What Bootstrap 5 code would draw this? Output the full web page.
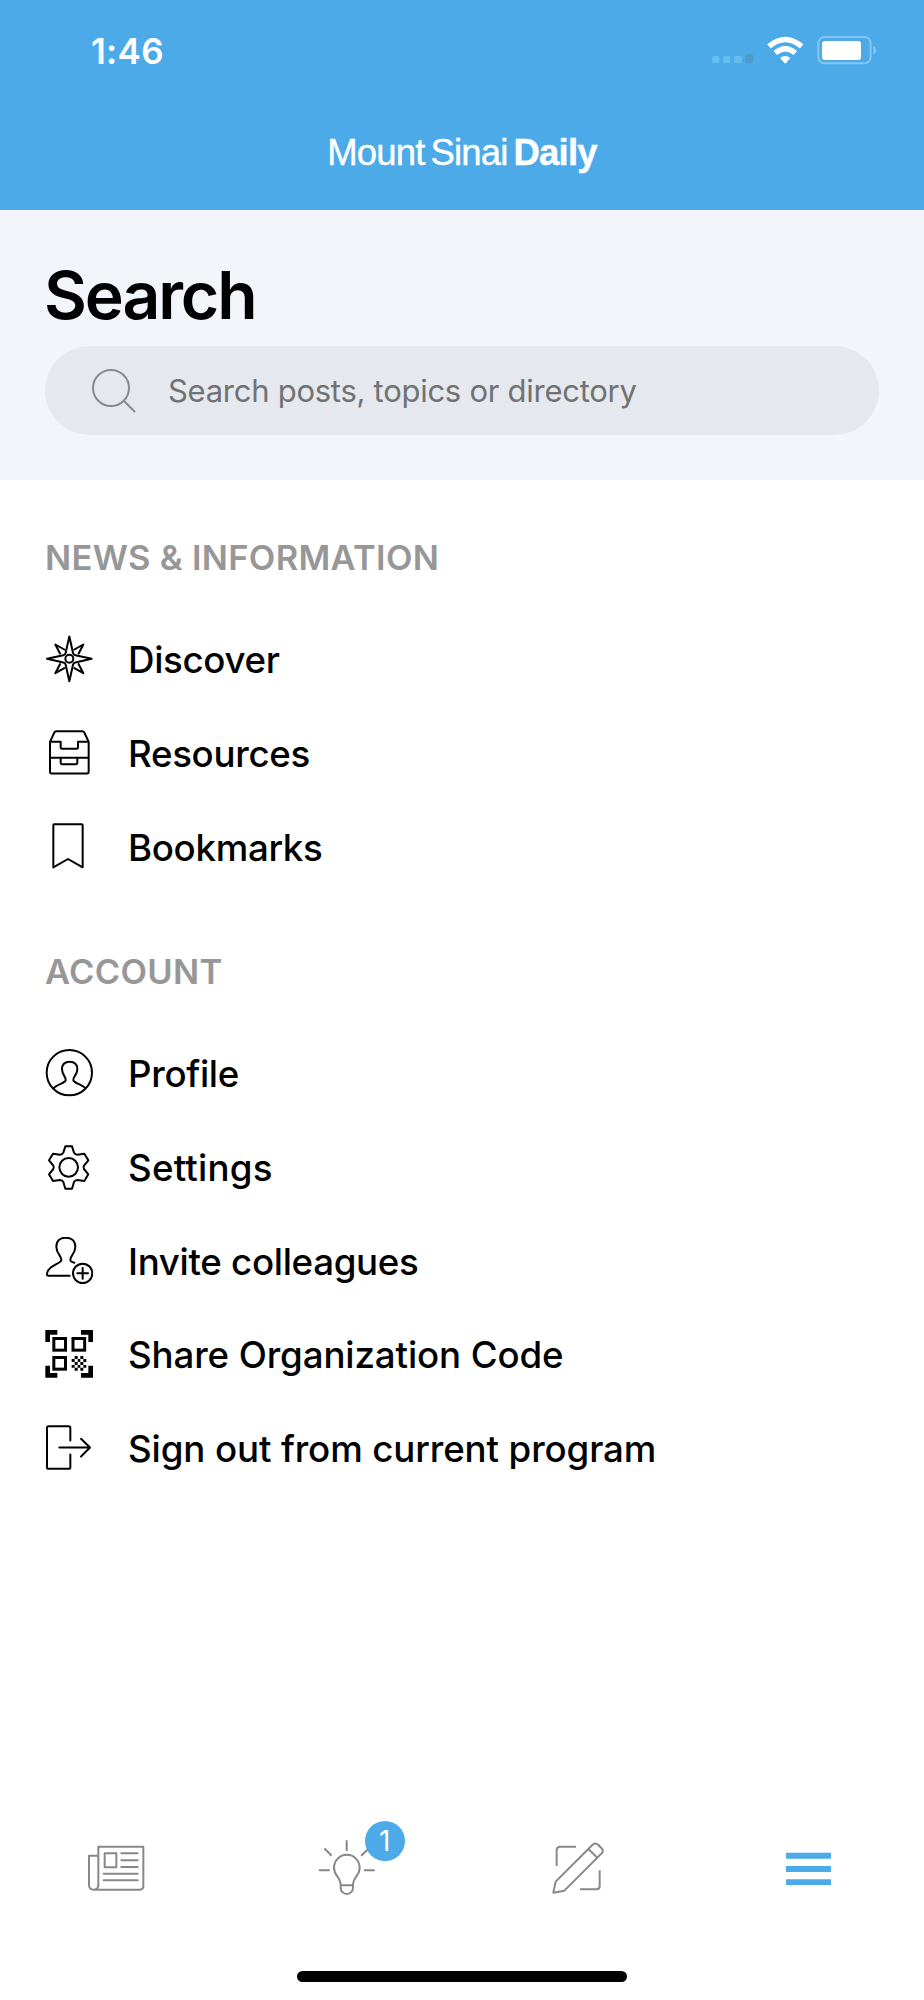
<!DOCTYPE html>
<html lang="en">
<head>
<meta charset="utf-8">
<meta name="viewport" content="width=device-width, initial-scale=1">
<title>Mount Sinai Daily</title>
<link href="https://cdn.jsdelivr.net/npm/bootstrap@5.3.0/dist/css/bootstrap.min.css" rel="stylesheet">
<style>
  :root { --brand: #4daae8; }
  body { font-family: Inter, "Liberation Sans", sans-serif; color: #000; background: #fff; }
  .screen { height: 2000px; }
  .top-bar { height: 210px; background: var(--brand); }
  .status { height: 100px; padding-left: 91px; padding-right: 24px; }
  .clock { font-size: 35px; font-weight: 600; line-height: 40px; padding-top: 2px; letter-spacing: .3px; }
  .brand-name { font-family: "Liberation Sans", Arial, sans-serif; font-size: 36.5px; line-height: 44px; padding-top: 31px; white-space: nowrap; letter-spacing: -.8px; word-spacing: -3.5px; -webkit-text-stroke: .4px #fff; }
  .finder { height: 270px; padding: 52px 45px 0; background: #f2f5fa; }
  .finder h1 { font-size: 66px; font-weight: 600; line-height: 66px; margin-bottom: 18px; margin-left: -1px; letter-spacing: -2.1px; }
  .pill { height: 89px; background: #e5e8ed; color: #707274; padding-left: 45px; font-size: 31px; letter-spacing: -.27px; }
  .pill svg { margin-right: 31px; }
  .pill span { padding-top: 1px; }
  .group { padding: 58px 45px 0; }
  .group h2 { font-size: 34.5px; font-weight: 600; line-height: 40px; color: #979797; margin-bottom: 34.5px; letter-spacing: .3px; }
  .group + .group { padding-top: 58px; }
  .entry { height: 93.75px; gap: 35px; font-size: 36.7px; font-weight: 500; color: #000; letter-spacing: -.32px; }
  .entry span { padding-top: 1px; }
  .entry.roomy { letter-spacing: -.12px; }
  .entry.wide { letter-spacing: .2px; }
  .line { fill: none; stroke: currentColor; stroke-width: 6; stroke-linecap: round; stroke-linejoin: round; }
  .tab { color: #888; }
  .tab.active { color: var(--brand); }
  .tab-icon { width: 72px; height: 72px; }
  .count { left: 54.2px; top: -10.7px; width: 40px; height: 40px; background: var(--brand); font-size: 28px; line-height: 40px; }
  .home-bar { width: 330px; height: 11px; margin: 67px auto 18px; background: #000; }
</style>
</head>
<body>
<div class="screen d-flex flex-column">
  <header class="top-bar text-white">
    <div class="status d-flex align-items-center justify-content-between">
      <span class="clock">1:46</span>
      <svg width="210" height="60" viewBox="0 0 630 180">
        <g fill="#63bdee"><rect x="66" y="108" width="22" height="22" rx="6"/><rect x="99" y="108" width="22" height="22" rx="6"/><rect x="132" y="108" width="24" height="22" rx="6"/></g>
        <rect x="165" y="102" width="24" height="28" rx="6" fill="#4f9ac9"/>
        <g fill="none" stroke="#fff" stroke-width="16"><path d="M237 79Q286 38 335 79"/><path d="M256 99Q286 73 316 99"/></g>
        <path d="M270 114Q286 102 301 114L286 131Z" fill="#fff"/>
        <rect x="385" y="51" width="157" height="79" rx="19" fill="none" stroke="#83c6f1" stroke-width="6"/>
        <rect x="396" y="63" width="117" height="57" rx="9" fill="#fff"/>
        <path d="M550 77Q558 81 558 91T550 105Z" fill="#83c6f1"/>
      </svg>
    </div>
    <div class="brand-name text-center">Mount Sinai <b>Daily</b></div>
  </header>

  <section class="finder">
    <h1>Search</h1>
    <div class="pill rounded-pill d-flex align-items-center">
      <svg width="47" height="47" viewBox="0 0 47 47" fill="none" stroke="#858a8e" stroke-width="2"><circle cx="21" cy="21" r="18"/><path d="M34 34L44.500 44.500" stroke-linecap="round"/></svg>
      <span>Search posts, topics or directory</span>
    </div>
  </section>

  <main class="flex-grow-1">
    <section class="group">
      <h2>NEWS &amp; INFORMATION</h2>
      <a class="entry d-flex align-items-center text-decoration-none" href="#">
        <svg width="48" height="48" viewBox="45 346.500 144 144"><g class="line"><path d="M118 351L129 400Q130 406 136 407L185 418L136 429Q130 430 129 436L118 485L107 436Q106 430 100 429L51 418L100 407Q106 406 107 400Z"/><circle cx="118" cy="418" r="12"/><path d="M133 390L160 375L146 402M103 390L76 375L90 402M133 446L160 461L146 434M103 446L76 461L90 434"/></g></svg>
        <span>Discover</span></a>
      <a class="entry d-flex align-items-center text-decoration-none" href="#">
        <svg width="48" height="48" viewBox="45 27.500 144 144"><g class="line"><path d="M60 66L73 38Q75 34 79 34H156Q161 34 163 38L176 66V156Q176 161 171 161H65Q60 161 60 156ZM60 66H92V83Q92 87 96 87H140Q144 87 144 83V66H176M60 114H176M92 114V129Q92 133 96 133H138Q142 133 142 129V114"/></g></svg>
        <span>Resources</span></a>
      <a class="entry d-flex align-items-center text-decoration-none" href="#">
        <svg width="48" height="48" viewBox="45 309 144 144"><path class="line" d="M72 313H155Q158 313 158 316V442L114 417L70 442V316Q70 313 72 313Z"/></svg>
        <span>Bookmarks</span></a>
    </section>
    <section class="group">
      <h2>ACCOUNT</h2>
      <a class="entry d-flex align-items-center text-decoration-none" href="#">
        <svg width="48" height="48" viewBox="45 57 144 144"><g class="line"><circle cx="118" cy="128" r="68"/><path d="M72 174C78 164 104 160 107 151C110 141 96 136 96 118C96 103 105 95 119 95S142 103 142 118C142 136 127 141 130 151C133 160 158 164 165 174"/></g></svg>
        <span>Profile</span></a>
      <a class="entry wide d-flex align-items-center text-decoration-none" href="#">
        <svg width="48" height="48" viewBox="45 339 144 144"><g class="line"><circle cx="116" cy="412" r="28"/><path d="M106 349H126L132 368Q135 374 142 374L163 371L175 391L162 407Q159 412 162 417L175 433L163 453L142 450Q135 450 132 456L126 476H106L100 456Q97 450 90 450L69 453L57 433L70 417Q73 412 70 407L57 391L69 371L90 374Q97 374 100 368Z"/></g></svg>
        <span>Settings</span></a>
      <a class="entry d-flex align-items-center text-decoration-none" href="#">
        <svg width="48" height="48" viewBox="45 50 144 144"><g class="line"><path d="M119 166H54Q50 166 51 160C54 135 87 132 93 122C99 108 79 104 79 79C79 62 90 52 107 52S136 62 136 79C136 104 116 108 122 122Q125 126 133 127"/><circle cx="158" cy="159" r="29"/><path d="M142 159H174M158 143V175"/></g></svg>
        <span>Invite colleagues</span></a>
      <a class="entry roomy d-flex align-items-center text-decoration-none" href="#">
        <svg width="48" height="48" viewBox="45 331 144 144" fill="currentColor"><path d="M46 331H82V345H60V367H46ZM189 331H153V345H175V367H189ZM46 474H82V460H60V438H46ZM189 474H153V460H175V438H189Z"/><g fill="none" stroke="currentColor" stroke-width="9"><rect x="71.500" y="356.500" width="35" height="35"/><rect x="129" y="356.500" width="35" height="35"/><rect x="71.500" y="413.500" width="35" height="35"/></g><path d="M134 409h9v9h-9zM151 409h9v9h-9zM125 418h9v9h-9zM143 418h8v9h-8zM160 418h9v9h-9zM134 427h9v9h-9zM151 427h9v9h-9zM125 436h9v8h-9zM143 436h8v8h-8zM160 436h9v8h-9zM134 444h9v9h-9zM151 444h9v9h-9z"/></svg>
        <span>Share Organization Code</span></a>
      <a class="entry roomy d-flex align-items-center text-decoration-none" href="#">
        <svg width="48" height="48" viewBox="45 612.500 144 144"><path class="line" d="M121 662V624Q121 619 116 619H56Q51 619 51 624V742Q51 747 56 747H116Q121 747 121 742V704M88 683H179M153 657L180 683L153 710"/></svg>
        <span>Sign out from current program</span></a>
    </section>
  </main>

  <footer>
    <nav class="row g-0">
      <a class="tab col-3 d-flex justify-content-center" href="#"><svg class="tab-icon" viewBox="60 96 216 216"><path class="line" d="M115 258V140H250V258Q250 269 239 269H101Q87 269 87 255V167H115V255Q115 268 103 269M134 160H169V202H134ZM184 160H233M184 181H233M184 201H233M131 221H233M131 241H233"/></svg></a>
      <a class="tab col-3 d-flex justify-content-center" href="#"><span class="position-relative d-inline-flex"><svg class="tab-icon" viewBox="753 96 216 216"><path class="line" d="M842 252C842 232 822 228 822 203A38.500 38.500 0 0 1 899 203C899 228 879 232 879 252V263A18.500 19 0 0 1 842 263ZM842 255.500H879M860 123V151M795 147L813 165M925 147L905 166M779 211H807M914 211H942"/></svg><span class="count position-absolute rounded-circle text-white text-center">1</span></span></a>
      <a class="tab col-3 d-flex justify-content-center" href="#"><svg class="tab-icon" viewBox="66 36 216 216"><path class="line" style="stroke-linecap:butt" d="M110 138V91Q110 80 121 80H168M239 151V198Q239 208 229 208H180M100 218L107 185L217 75Q226 66 235 75L244 84Q253 93 244 101L133 212ZM206 88L232 113"/></svg></a>
      <a class="tab active col-3 d-flex justify-content-center" href="#"><svg class="tab-icon" viewBox="759 36 216 216" fill="currentColor"><path d="M798 98H933V116H798ZM798 138H933V156H798ZM798 178H933V195H798Z"/></svg></a>
    </nav>
    <div class="home-bar rounded-pill"></div>
  </footer>
</div>
<script src="https://cdn.jsdelivr.net/npm/bootstrap@5.3.0/dist/js/bootstrap.bundle.min.js"></script>
</body>
</html>
